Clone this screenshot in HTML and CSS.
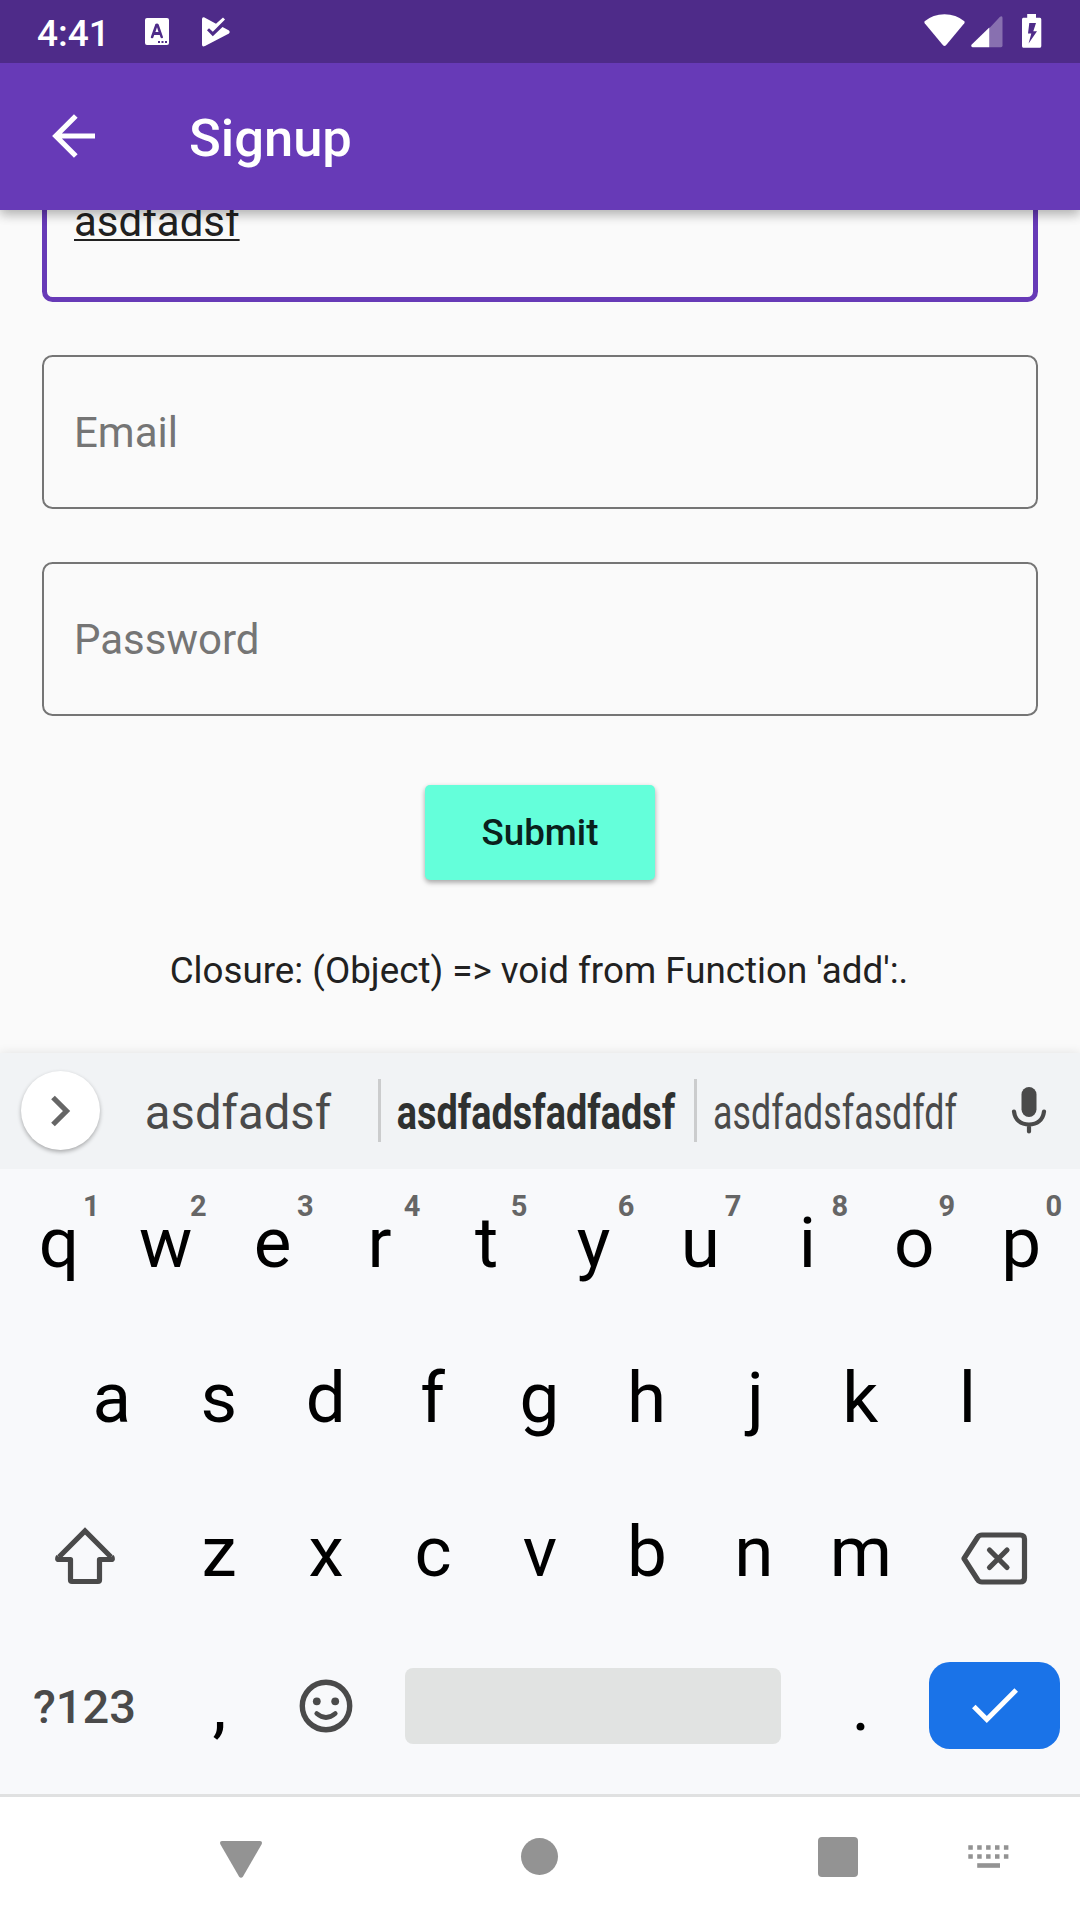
FILE: index.html
```html
<!DOCTYPE html>
<html lang="en">
<head>
<meta charset="utf-8">
<title>Signup</title>
<link rel="stylesheet" href="styles.css">
</head>
<body>
<div class="screen">
  <header class="top">
    <div class="status">
      <span class="clock">4:41</span>
      <svg class="s-lang" width="24" height="27" viewBox="0 0 24 27"><path fill="#fff" fill-rule="evenodd" d="M2 0H22Q24 0 24 2V25Q24 27 22 27H2Q0 27 0 25V2Q0 0 2 0ZM10.4 6 5.7 19.3Q6 20.6 7.3 20.3 8.200 20.200 8.500 19L9.200 17H14.700L15.400 19Q15.800 20.300 16.800 20.300 18.200 20.200 18 19L13.700 6.500Q13 5.400 12 5.400 10.800 5.400 10.400 6ZM12 9.300 13.500 14H10.400ZM13 23V25H15V23ZM16.500 23V25H18.500V23ZM20 23V25H22V23Z"/></svg>
      <svg class="s-play" width="28" height="30" viewBox="0 0 28 30"><path fill="#fff" d="M0 2Q0 0 2 .3L14 6.800 21 .5 23 2.500 10.800 14.800 7 11.200 5 13.200 10.800 19.300 20.500 10 27 13.500Q28.600 15 27 16.500L3 29Q0 30.300 0 27.500Z"/></svg>
      <svg class="s-wifi" width="41" height="33" viewBox="0 0 41 33"><path fill="#fff" d="M.6 7.300Q9 .2 20.500 .2 32 .2 40.400 7.300 41 8.300 40.300 9.200L22 31.300Q20.500 32.600 19 31.300L.7 9.200Q0 8.300 .6 7.300Z"/></svg>
      <svg class="s-cell" width="32" height="32" viewBox="0 0 32 32"><path fill="#fff" fill-opacity=".33" d="M18.300 12.300 29 .8Q31.500-.8 31.500 2V29.500Q31.500 31.200 30 31.200H18.300Z"/><path fill="#fff" d="M18.300 11.500V31.200H1.500Q-.5 30.800 .5 28.800Z"/></svg>
      <svg class="s-batt" width="20" height="34" viewBox="0 0 20 34"><path fill="#fff" fill-rule="evenodd" d="M5.200 0H14V3.800H18Q19.300 3.800 19.300 5.500V32Q19.300 33.700 18 33.700H1.300Q0 33.700 0 32V5.500Q0 3.800 1.300 3.800H5.200ZM7.300 9 6 19.500H9.300L6.600 29.500 15 17.200H11.300L14 9Z"/></svg>
    </div>
    <div class="appbar">
      <svg class="back" width="43" height="44" viewBox="0 0 43 44" fill="none" stroke="#fff" stroke-width="5.200"><path d="M23.800 2 3.800 22 23.800 42M3.800 22H43"/></svg>
      <h1 class="title">Signup</h1>
    </div>
  </header>

  <main class="form">
    <div class="field focused"><span class="value">asdfadsf</span></div>
    <div class="field">Email</div>
    <div class="field">Password</div>
    <button class="submit">Submit</button>
    <p class="message">Closure: (Object) =&gt; void from Function 'add':.</p>
  </main>

  <section class="keyboard">
    <div class="strip">
      <div class="expand"><svg width="20" height="32" viewBox="0 0 20 32" fill="none" stroke="#666" stroke-width="5.200"><path d="M2 2.500 15.500 16 2 29.500"/></svg></div>
      <div class="sug">asdfadsf</div>
      <i class="sep"></i>
      <div class="sug best"><span>asdfadsfadfadsf</span></div>
      <i class="sep"></i>
      <div class="sug narrow"><span>asdfadsfasdfdf</span></div>
      <svg class="mic" width="34" height="48" viewBox="0 0 34 48"><rect x="9.500" y="0" width="15" height="30" rx="7.500" fill="#4a4a4a"/><path d="M2 24.500C3 33 9 37.500 17 37.500S31 33 32 24.500M17 38V44.500" fill="none" stroke="#4a4a4a" stroke-width="4.200" stroke-linecap="round"/></svg>
    </div>
    <div class="rows">
      <div class="row">
        <div class="key">q<sup>1</sup></div><div class="key">w<sup>2</sup></div><div class="key">e<sup>3</sup></div><div class="key">r<sup>4</sup></div><div class="key">t<sup>5</sup></div><div class="key">y<sup>6</sup></div><div class="key">u<sup>7</sup></div><div class="key">i<sup>8</sup></div><div class="key">o<sup>9</sup></div><div class="key">p<sup>0</sup></div>
      </div>
      <div class="row home-row">
        <div class="key">a</div><div class="key">s</div><div class="key">d</div><div class="key">f</div><div class="key">g</div><div class="key">h</div><div class="key j">j</div><div class="key">k</div><div class="key">l</div>
      </div>
      <div class="row">
        <div class="key wide shift"><svg width="60" height="58" viewBox="0 0 60 58" fill="none" stroke="#4a4a4a" stroke-width="5.200" stroke-linejoin="round"><path stroke-linejoin="miter" d="M4 30 30 4 56 30"/><path d="M3.500 29.500Q1.500 32.500 4 32.500H15.500V53Q15.500 54.500 17 54.500H43Q44.500 54.500 44.500 53V32.500H56Q58.500 32.500 56.500 29.500"/></svg></div>
        <div class="key">z</div><div class="key">x</div><div class="key">c</div><div class="key">v</div><div class="key">b</div><div class="key">n</div><div class="key">m</div>
        <div class="key wide del"><svg width="67" height="53" viewBox="0 0 67 53" fill="none" stroke="#4a4a4a" stroke-width="5.200" stroke-linejoin="round"><path d="M3 26.500 16.500 5.500Q18 3 21 3H59Q63.500 3 63.500 7V46Q63.500 50 59 50H21Q18 50 16.500 47.500Z"/><path stroke-linecap="round" d="M28.500 18 46 35.500M46 18 28.500 35.500"/></svg></div>
      </div>
      <div class="row">
        <div class="key wide symbols">?123</div>
        <div class="key punct comma">,</div>
        <div class="key emoji"><svg width="54" height="54" viewBox="0 0 54 54"><circle cx="27" cy="27" r="23.700" fill="none" stroke="#4a4a4a" stroke-width="5.400"/><circle cx="17.800" cy="22.300" r="3.900" fill="#4a4a4a"/><circle cx="36.200" cy="22.300" r="3.900" fill="#4a4a4a"/><path d="M17.700 34.500Q27 42.500 36.300 34.500" fill="none" stroke="#4a4a4a" stroke-width="4.600" stroke-linecap="round"/></svg></div>
        <div class="space"></div>
        <div class="key punct">.</div>
        <div class="enter"><svg width="46" height="35" viewBox="0 0 46 35" fill="none" stroke="#fff" stroke-width="5"><path d="M1.800 18.500 14.800 31.500 44.200 2"/></svg></div>
      </div>
    </div>
  </section>

  <nav class="nav">
    <svg class="hide" width="42" height="37" viewBox="0 0 42 37"><path fill="#939393" d="M2 0H40Q43 .5 41.500 3.500L23 35.500Q21 38 19 35.500L.5 3.500Q-1 .5 2 0Z"/></svg>
    <i class="home"></i>
    <i class="recent"></i>
    <svg class="ime" width="41" height="24" viewBox="0 0 41 24" fill="none" stroke="#939393" stroke-width="4.600"><path stroke-dasharray="4.500 4.400" d="M.3 2.500H41M.3 11.500H41"/><path d="M9.200 20.500H32"/></svg>
  </nav>
</div>
</body>
</html>
```
FILE: styles.css
```css
* { box-sizing: border-box; }
body { margin: 0; font-family: Roboto, sans-serif; }
svg { display: block; flex: none; overflow: visible; }

.screen { width: 1080px; height: 1920px; display: flex; flex-direction: column; overflow: hidden; background: #fafafa; }

.top { position: relative; z-index: 1; height: 210px; flex: none; background: #673ab7; color: #fff; box-shadow: 0 5px 10px rgba(0,0,0,.2), 0 2px 14px rgba(0,0,0,.14); }
.status { height: 63px; display: flex; align-items: flex-start; padding-left: 37px; background: #4e2b89; }
.clock { width: 108px; font-size: 37px; font-weight: 500; line-height: 68px; }
.s-lang { margin-top: 18px; }
.s-play { margin: 17px 0 0 33px; }
.s-wifi { margin: 14px 0 0 694px; }
.s-cell { margin: 15.700px 0 0 6px; }
.s-batt { margin: 14px 0 0 19px; }

.appbar { height: 147px; display: flex; align-items: center; padding-left: 52px; }
.back { margin-bottom: 1px; }
.title { margin: 0 0 0 94px; font-size: 52.500px; font-weight: 500; line-height: 147px; padding-top: 4px; }

.form { height: 843px; flex: none; display: flex; flex-direction: column; align-items: center; padding: 0 42px; overflow: hidden; }
.field { width: 996px; height: 154px; flex: none; margin-bottom: 53px; padding-left: 30px; border: 2.600px solid #757575; border-radius: 10.500px; color: #757575; font-size: 42px; line-height: 152px; }
.focused { height: 155px; margin-top: -63px; border: 5.250px solid #673ab7; padding-left: 27px; color: #212121; line-height: 140px; }
.value { text-decoration: underline; text-decoration-thickness: 2px; text-underline-offset: 3px; text-decoration-skip-ink: none; }
.submit { flex: none; width: 230px; height: 94.500px; margin-top: 16px; padding: 0; border: 0; border-radius: 5px; background: #64ffda; color: #0a211c; font: 500 36.750px/96px Roboto, sans-serif; box-shadow: 0 3px 5px rgba(0,0,0,.26), 0 1px 5px rgba(0,0,0,.1); }
.message { margin: 69px 2px 0 0; font-size: 36.750px; line-height: 44px; color: #212121; white-space: nowrap; }

.keyboard { height: 741px; flex: none; background: #f8f9fb; box-shadow: 0 0 10px rgba(0,0,0,.1); }
.strip { height: 116px; display: flex; align-items: center; background: #f1f3f5; padding: 0 0 1px 21px; }
.expand { width: 79px; height: 79px; flex: none; display: flex; align-items: center; justify-content: center; border-radius: 50%; background: #fff; box-shadow: 0 2px 4px rgba(0,0,0,.3); }
.sug { width: 278px; padding: 4px 2px 0 0; font-size: 47.250px; line-height: 116px; color: #4a4a4a; display: flex; justify-content: center; }
.best { width: 313px; padding-right: 3px; font-weight: 700; color: #2f3130; }
.best span { transform: scaleX(.8); }
.narrow span { transform: scaleX(.757); }
.sep { width: 3px; height: 63px; background: #cbcccd; }
.mic { margin-left: 36.500px; }

.rows { display: grid; grid-template-rows: repeat(4, 148.700px); row-gap: 6px; padding: 0 5.250px; }
.row { display: flex; justify-content: center; align-items: center; }
.home-row { padding-right: 1px; }
.key { position: relative; width: 106.950px; height: 148.700px; flex: none; font-size: 71px; line-height: 148.700px; text-align: center; color: #000; }
.key sup { position: absolute; left: 76px; top: 20px; width: 20px; font-size: 29px; font-weight: 700; line-height: 34px; color: #666; }
.j { padding-left: 4px; }
.wide { width: 160.400px; display: flex; align-items: center; justify-content: center; }
.shift { padding: 6px 2px 0 0; }
.del { padding: 12px 1px 0 0; }
.symbols { font-size: 47px; font-weight: 500; color: #4a4a4a; padding: 0 2px 1px 0; }
.punct { line-height: 145px; }
.comma { padding-left: 1px; }
.emoji { display: flex; align-items: center; justify-content: center; padding: 0 1px 3px 0; }
.space { width: 376px; height: 76px; margin: 0 26.700px 3px 25.300px; border-radius: 8px; background: #e1e3e2; }
.enter { width: 131px; height: 87px; margin: 0 14.700px 4px; border-radius: 21px; background: #1a73e8; display: flex; align-items: center; justify-content: center; }

.nav { height: 126px; flex: none; display: flex; align-items: center; border-top: 3px solid #e0e1e1; background: #fff; padding-left: 220px; }
.hide { margin-top: 2px; }
.home { width: 37px; height: 37px; margin: 0 0 4px 259px; border-radius: 50%; background: #939393; }
.recent { width: 40px; height: 40px; margin: 0 0 3px 260px; border-radius: 4px; background: #939393; }
.ime { margin: 0 0 3px 110px; }
```
